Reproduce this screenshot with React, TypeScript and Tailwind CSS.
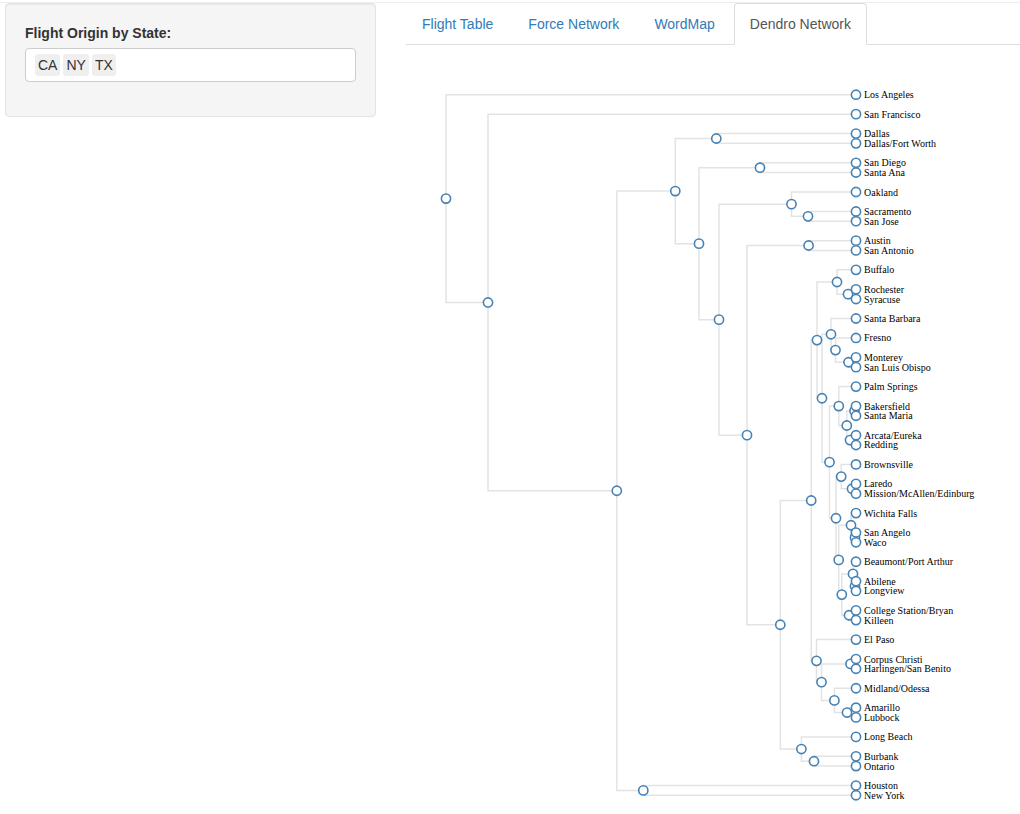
import React, { useState } from "react";

type Leaf = string;
type Branch = { x: number; children: [TreeNode, TreeNode] };
type TreeNode = Leaf | Branch;

const b = (x: number, first: TreeNode, second: TreeNode): Branch => ({
  x,
  children: [first, second],
});

const westAndBorder = b(
  829.5,
  b(
    838.8,
    "Palm Springs",
    b(846.8, b(854.5, "Bakersfield", "Santa Maria"), b(850, "Arcata/Eureka", "Redding")),
  ),
  b(
    836,
    b(841.2, "Brownsville", b(852, "Laredo", "Mission/McAllen/Edinburg")),
    b(
      838.7,
      b(851, "Wichita Falls", b(855, "San Angelo", "Waco")),
      b(
        841.8,
        b(853, "Beaumont/Port Arthur", b(855, "Abilene", "Longview")),
        b(849, "College Station/Bryan", "Killeen"),
      ),
    ),
  ),
);

const smallAirports = b(
  811.2,
  b(
    817,
    b(837, "Buffalo", b(848, "Rochester", "Syracuse")),
    b(
      822,
      b(831, "Santa Barbara", b(835.5, "Fresno", b(848.5, "Monterey", "San Luis Obispo"))),
      westAndBorder,
    ),
  ),
  b(
    816.5,
    "El Paso",
    b(
      821.5,
      b(850.5, "Corpus Christi", "Harlingen/San Benito"),
      b(834.4, "Midland/Odessa", b(847, "Amarillo", "Lubbock")),
    ),
  ),
);

const tree = b(
  446,
  "Los Angeles",
  b(
    488,
    "San Francisco",
    b(
      616.8,
      b(
        675.3,
        b(716.3, "Dallas", "Dallas/Fort Worth"),
        b(
          699,
          b(760, "San Diego", "Santa Ana"),
          b(
            719,
            b(791.5, "Oakland", b(808, "Sacramento", "San Jose")),
            b(
              747,
              b(808.6, "Austin", "San Antonio"),
              b(
                780.3,
                smallAirports,
                b(801.4, "Long Beach", b(814, "Burbank", "Ontario")),
              ),
            ),
          ),
        ),
      ),
      b(643.3, "Houston", "New York"),
    ),
  ),
);

const ORIGIN_X = 406;
const LEAF_X = 856;
const TOP = 49.7;
const STEP = 9.73;

type Point = { x: number; y: number; label?: string };

function layout(root: Branch) {
  const nodes: Point[] = [];
  const links: string[] = [];
  let position = 0;
  let previousParent: Branch | null = null;

  const place = (node: TreeNode, parent: Branch | null): Point => {
    if (typeof node === "string") {
      if (previousParent) position += previousParent === parent ? 1 : 2;
      previousParent = parent;
      const leaf = { x: LEAF_X - ORIGIN_X, y: TOP + position * STEP, label: node };
      nodes.push(leaf);
      return leaf;
    }
    const point: Point = { x: node.x - ORIGIN_X, y: 0 };
    nodes.push(point);
    const placed = node.children.map((child) => place(child, node));
    point.y = (placed[0].y + placed[1].y) / 2;
    placed.forEach((child) => links.push(`M${point.x},${point.y}V${child.y}H${child.x}`));
    return point;
  };

  place(root, null);
  return { nodes, links };
}

const { nodes, links } = layout(tree);

function Dendrogram() {
  return (
    <svg
      width="614"
      height="769"
      role="img"
      aria-label="Dendrogram of flight origin cities"
      className="block max-w-none"
    >
      <g fill="none" stroke="#ccc" strokeOpacity="0.55" strokeWidth="1.5">
        {links.map((d) => (
          <path key={d} d={d} />
        ))}
      </g>
      {nodes.map((node, i) => (
        <g key={i} transform={`translate(${node.x},${node.y})`}>
          <circle r="4.6" fill="#fff" stroke="#4682b4" strokeWidth="1.6" />
          {node.label && (
            <text x="8" y="3.5" className="fill-black font-['Liberation_Serif',serif] text-[10px]">
              {node.label}
            </text>
          )}
        </g>
      ))}
    </svg>
  );
}

const tabs = ["Flight Table", "Force Network", "WordMap", "Dendro Network"];

function Tabs() {
  return (
    <nav className="flex gap-[3px] border-b border-[#ddd]">
      {tabs.map((tab) => (
        <a
          key={tab}
          href="#"
          aria-current={tab === "Dendro Network" ? "page" : undefined}
          className={
            tab === "Dendro Network"
              ? "-mb-px rounded-t border border-[#ddd] border-b-white bg-white px-[15px] py-2.5 whitespace-nowrap text-[#555]"
              : "-mb-px rounded-t border border-transparent px-[15px] py-2.5 whitespace-nowrap text-[#337ab7]"
          }
        >
          {tab}
        </a>
      ))}
    </nav>
  );
}

function StateFilter() {
  const [query, setQuery] = useState("");
  return (
    <form className="rounded border border-[#e3e3e3] bg-[#f5f5f5] px-[19px] pt-[19px] pb-[34px] shadow-[inset_0_1px_1px_rgba(0,0,0,0.05)]">
      <label htmlFor="state" className="mb-[5px] block font-bold">
        Flight Origin by State:
      </label>
      <div className="flex items-center gap-[3px] rounded border border-[#ccc] bg-white px-[9px] py-[5px]">
        {["CA", "NY", "TX"].map((state) => (
          <span key={state} className="rounded-[3px] bg-[#efefef] px-[3px] py-px">
            {state}
          </span>
        ))}
        <input
          id="state"
          type="text"
          value={query}
          onChange={(e) => setQuery(e.target.value)}
          className="min-w-0 flex-1 bg-transparent outline-none"
        />
      </div>
    </form>
  );
}

export default function App() {
  return (
    <div className="min-h-screen bg-white pt-0.5 font-['Liberation_Sans',Arial,sans-serif] text-sm/5 text-[#333]">
      <div className="border-t border-[#eee]">
        <div className="grid grid-cols-[minmax(0,371fr)_minmax(0,614fr)] items-start gap-[30px] pl-[5px]">
          <StateFilter />
          <main>
            <Tabs />
            <Dendrogram />
          </main>
        </div>
      </div>
    </div>
  );
}
